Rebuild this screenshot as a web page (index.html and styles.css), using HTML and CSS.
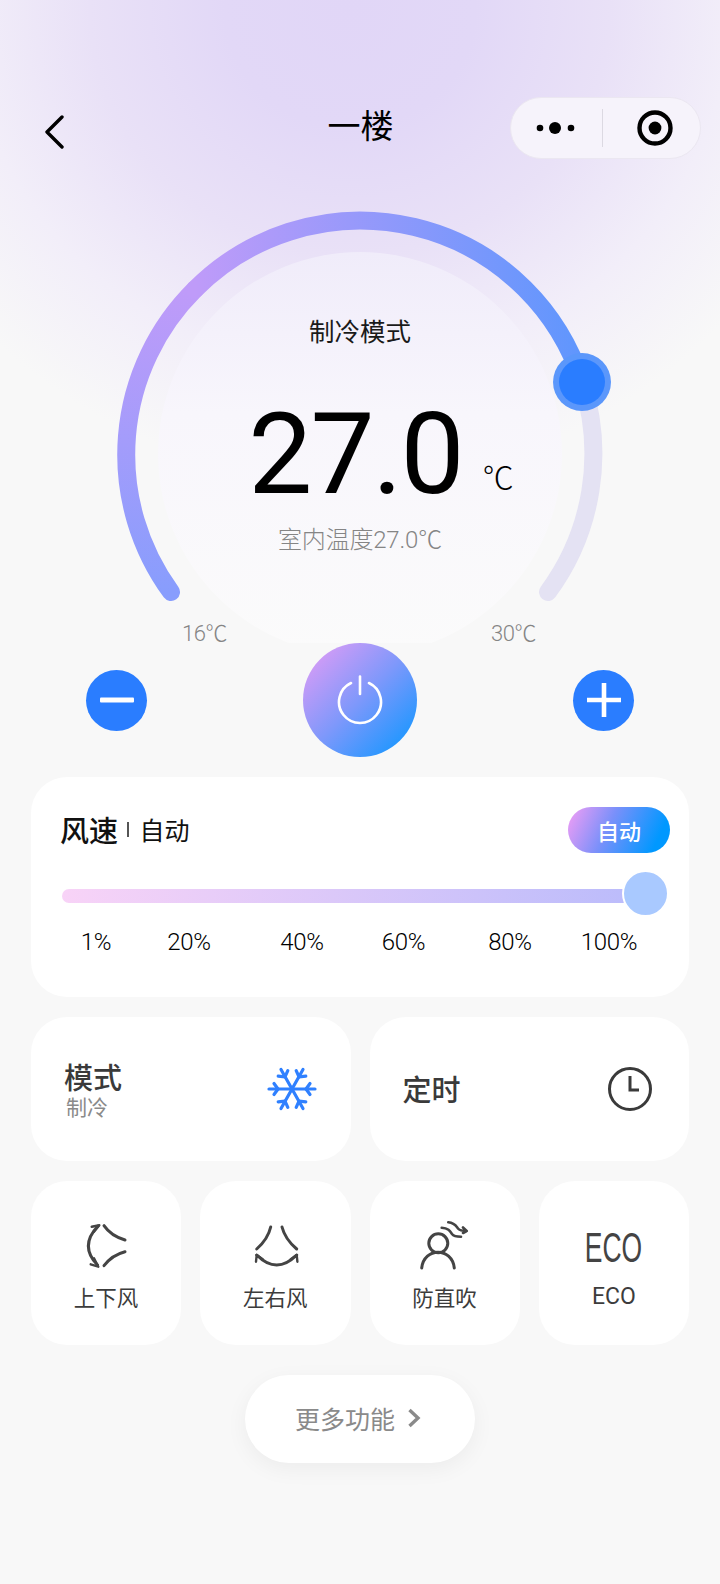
FILE: index.html
```html
<!DOCTYPE html>
<html lang="zh">
<head>
<meta charset="utf-8">
<title>一楼</title>
<link rel="stylesheet" href="styles.css">
</head>
<body>
<div class="page">
  <header class="nav">
    <svg class="back" width="20" height="34" viewBox="0 0 20 34"><path d="M18 2 L3 17 L18 32" fill="none" stroke="#000" stroke-width="3.4" stroke-linecap="round" stroke-linejoin="round"/></svg>
    <h1 class="title">一楼</h1>
    <div class="capsule">
      <div class="capsule-part">
        <svg width="42" height="14" viewBox="0 0 42 14"><circle cx="4" cy="7" r="3.3"/><circle cx="19" cy="7" r="6"/><circle cx="35" cy="7" r="3.3"/></svg>
      </div>
      <span class="capsule-line"></span>
      <div class="capsule-part capsule-target">
        <svg width="38" height="38" viewBox="0 0 38 38"><circle cx="19" cy="19" r="15.5" fill="none" stroke="#000" stroke-width="4.4"/><circle cx="19" cy="19" r="6.4"/></svg>
      </div>
    </div>
  </header>

  <section class="gauge">
    <svg class="gauge-art" width="720" height="484" viewBox="0 159 720 484">
      <defs>
        <linearGradient id="arcA" gradientUnits="userSpaceOnUse" x1="0" y1="592" x2="0" y2="290">
          <stop offset="0" stop-color="#889dfd"/>
          <stop offset="1" stop-color="#bf9bf9"/>
        </linearGradient>
        <linearGradient id="arcB" gradientUnits="userSpaceOnUse" x1="195" y1="0" x2="582" y2="0">
          <stop offset="0" stop-color="#bf9bf9"/>
          <stop offset="1" stop-color="#5f96fd"/>
        </linearGradient>
        <linearGradient id="disc" gradientUnits="userSpaceOnUse" x1="0" y1="252" x2="0" y2="656">
          <stop offset="0" stop-color="#f0ecfa"/>
          <stop offset="0.4" stop-color="#f8f6fc"/>
          <stop offset="1" stop-color="#fbfbfb"/>
        </linearGradient>
      </defs>
      <circle cx="360" cy="454" r="202" fill="url(#disc)"/>
      <path d="M548 592 A233 233 0 0 0 582 382" fill="none" stroke="#e4e2f3" stroke-width="18" stroke-linecap="round"/>
      <path d="M171 592 A233 233 0 0 1 195.2 289.2" fill="none" stroke="url(#arcA)" stroke-width="18" stroke-linecap="round"/>
      <path d="M195.2 289.2 A233 233 0 0 1 582 382" fill="none" stroke="url(#arcB)" stroke-width="18" stroke-linecap="round"/>
      <circle cx="582" cy="382" r="29" fill="#5b97fb"/>
      <circle cx="582" cy="382" r="23" fill="#2a7dff"/>
    </svg>
    <div class="mode">制冷模式</div>
    <div class="temp">27.0<span class="unit">℃</span></div>
    <div class="indoor">室内温度27.0℃</div>
    <div class="range"><span>16℃</span><span>30℃</span></div>
  </section>

  <section class="controls">
    <button class="round-btn">
      <svg width="34" height="6" viewBox="0 0 34 6"><rect width="34" height="5" y="0.5" fill="#fff" rx="1"/></svg>
    </button>
    <button class="power">
      <svg width="48" height="50" viewBox="0 0 48 50"><path d="M15 8 A21 21 0 1 0 33 8" fill="none" stroke="#fff" stroke-width="2.6" stroke-linecap="round"/><path d="M24 1.5 V19" fill="none" stroke="#fff" stroke-width="2.6" stroke-linecap="round"/></svg>
    </button>
    <button class="round-btn">
      <svg width="36" height="36" viewBox="0 0 36 36"><path d="M1 18 H35 M18 1 V35" fill="none" stroke="#fff" stroke-width="4.6"/></svg>
    </button>
  </section>

  <main class="cards">
    <section class="card speed">
      <div class="speed-head">
        <div class="speed-title"><strong>风速</strong><span class="speed-sep"></span><span class="speed-val">自动</span></div>
        <div class="pill">自动</div>
      </div>
      <div class="slider"><span class="thumb"></span></div>
      <div class="ticks"><span>1%</span><span>20%</span><span>40%</span><span>60%</span><span>80%</span><span>100%</span></div>
    </section>

    <div class="row-two">
      <section class="card wide mode-card">
        <div class="wide-text"><div class="wide-title">模式</div><div class="wide-sub">制冷</div></div>
        <svg class="flake" width="50" height="44" viewBox="0 0 50 44">
          <g fill="none" stroke="#2f80ff" stroke-width="3.2" stroke-linecap="round" stroke-linejoin="round">
            <path d="M2 22 H48"/>
            <path d="M14 2.5 L36 41.5"/>
            <path d="M36 2.5 L14 41.5"/>
            <path d="M7 16.5 L11 22 L7 27.5 M43 16.5 L39 22 L43 27.5"/>
            <path d="M11.2 9.2 L18 9.9 L20.8 3.7 M38.8 9.2 L32 9.9 L29.2 3.7"/>
            <path d="M11.2 34.8 L18 34.1 L20.8 40.3 M38.8 34.8 L32 34.1 L29.2 40.3"/>
          </g>
        </svg>
      </section>
      <section class="card wide timer-card">
        <div class="wide-title">定时</div>
        <svg class="clock" width="46" height="46" viewBox="0 0 46 46"><circle cx="23" cy="23" r="20.5" fill="none" stroke="#3a3a3a" stroke-width="3"/><path d="M23 10 V24 H32" fill="none" stroke="#3a3a3a" stroke-width="3"/></svg>
      </section>
    </div>

    <div class="row-four">
      <section class="card tile">
        <svg class="tile-icon" width="46" height="50" viewBox="0 0 46 50">
          <g fill="none" stroke="#444" stroke-width="3" stroke-linecap="round" stroke-linejoin="round">
            <path d="M15 5 Q-4 25 14.5 44"/>
            <path d="M8.7 5.7 L16.3 4.3 L11 10.7 M7.7 43.3 L15.3 45.7 L11 37.3" stroke-width="2.4"/>
            <path d="M21 4.7 Q28 15 42 19"/>
            <path d="M42 30.7 Q29 34 21 44.7"/>
          </g>
        </svg>
        <div class="tile-label">上下风</div>
      </section>
      <section class="card tile">
        <svg class="tile-icon" width="50" height="50" viewBox="-2 0 50 50">
          <g fill="none" stroke="#444" stroke-width="3" stroke-linecap="round" stroke-linejoin="round">
            <path d="M18.7 6 Q16 18 4.7 28"/>
            <path d="M30 6 Q33 18 44.7 28"/>
            <path d="M4.7 34 Q24.7 54 44.7 34"/>
            <path d="M4 40.7 L4.7 34 L10.7 38.3 M45.4 40.7 L44.7 34 L38.7 38.3" stroke-width="2.4"/>
          </g>
        </svg>
        <div class="tile-label">左右风</div>
      </section>
      <section class="card tile">
        <svg class="tile-icon" width="52" height="50" viewBox="0 0 52 50">
          <g fill="none" stroke="#444" stroke-width="3" stroke-linecap="round" stroke-linejoin="round">
            <circle cx="19.3" cy="22.3" r="9.5"/>
            <path d="M2.7 47 C5 26 33 26 35.3 47"/>
            <path d="M29.3 1.3 C36 2 37 5 39 7.5 C41 10 44 10 47.7 10 M44 6.5 L47.7 10 L44 12" stroke-width="2.6"/>
            <path d="M22.7 6.7 C29 7 31 10 33 13 C35 15.7 38 15.7 42 15.7" stroke-width="2.6"/>
          </g>
        </svg>
        <div class="tile-label">防直吹</div>
      </section>
      <section class="card tile">
        <div class="eco-mark">ECO</div>
        <div class="tile-label tile-label-latin">ECO</div>
      </section>
    </div>

    <button class="more">更多功能<svg width="14" height="20" viewBox="0 0 14 20"><path d="M2.5 2 L11 10 L2.5 18" fill="none" stroke="#8a8a8a" stroke-width="3.4"/></svg></button>
  </main>
</div>
</body>
</html>
```
FILE: styles.css
```css
* { box-sizing: border-box; }
html, body { margin: 0; padding: 0; }
body {
  width: 720px;
  height: 1584px;
  overflow: hidden;
  font-family: "Noto Sans CJK SC", Roboto, sans-serif;
  background: #f8f8f8;
}
button { font-family: inherit; border: 0; padding: 0; }

.page {
  height: 1584px;
  padding-top: 97px;
  background:
    radial-gradient(ellipse 500px 470px at 350px 10px, #e1d6f7 0%, #e2d8f7 25%, #e9e1f7 52%, #f2eef9 76%, #f8f8f8 100%);
}

.nav {
  display: grid;
  grid-template-columns: 1fr auto 1fr;
  align-items: center;
  height: 62px;
  padding: 0 19px 0 20px;
}
.back { margin: 8px 0 0 24px; }
.title {
  margin: -9px 0 0;
  font-size: 33px;
  font-weight: 400;
  line-height: 40px;
  color: #000;
}
.capsule {
  justify-self: end;
  display: flex;
  align-items: center;
  width: 191px;
  height: 62px;
  border-radius: 31px;
  border: 1px solid #ebe7f1;
  background: #f6f3fb;
}
.capsule-part { flex: 1; display: flex; justify-content: center; align-items: center; }
.capsule-part svg { display: block; }
.capsule-target { padding-left: 6px; }
.capsule-line { width: 1px; height: 38px; background: #dcd9e2; }

.gauge {
  position: relative;
  height: 484px;
  display: flex;
  flex-direction: column;
  align-items: center;
  padding-top: 153px;
}
.gauge-art { position: absolute; left: 0; top: 0; display: block; }
.mode, .temp, .indoor, .range { position: relative; }
.mode { font-size: 25.5px; line-height: 36px; color: #1a1a1a; }
.temp {
  margin: 46px 9px 0 0;
  font-family: Roboto, sans-serif;
  font-size: 114px;
  line-height: 120px;
  letter-spacing: -2px;
  color: #000;
}
.unit {
  position: absolute;
  left: 100%;
  bottom: 20px;
  margin-left: 20px;
  font-family: "Noto Sans CJK SC", sans-serif;
  font-weight: 300;
  font-size: 31px;
  line-height: 36px;
  letter-spacing: 0;
  white-space: nowrap;
}
.indoor {
  margin-top: 10px;
  font-family: Roboto, "Noto Sans CJK SC", sans-serif;
  font-weight: 300;
  font-size: 24px;
  line-height: 32px;
  letter-spacing: -0.2px;
  color: #858585;
}
.range {
  align-self: stretch;
  margin-top: auto;
  padding: 0 184px 0 182px;
  display: flex;
  justify-content: space-between;
  font-family: Roboto, "Noto Sans CJK SC", sans-serif;
  font-weight: 300;
  font-size: 22px;
  line-height: 28px;
  letter-spacing: -0.5px;
  color: #858585;
  margin-bottom: -5px;
}

.controls {
  position: relative;
  height: 114px;
  padding: 0 86px;
  display: flex;
  align-items: center;
  justify-content: space-between;
}
.round-btn {
  width: 61px;
  height: 61px;
  border-radius: 50%;
  background: #2a7dff;
  display: flex;
  align-items: center;
  justify-content: center;
}
.power {
  width: 114px;
  height: 114px;
  border-radius: 50%;
  background: linear-gradient(135deg, #d99cf6 8%, #7e98fb 50%, #1c97ff 90%);
  display: flex;
  align-items: center;
  justify-content: center;
}

.cards {
  margin-top: 20px;
  padding: 0 31px;
  display: flex;
  flex-direction: column;
  gap: 20px;
}
.card { background: #fff; border-radius: 36px; }

.speed { height: 220px; padding: 30px 19px 0 29px; }
.speed-head { display: flex; justify-content: space-between; align-items: center; height: 46px; }
.speed-title { display: flex; align-items: center; gap: 9px; margin-top: -2px; color: #111; }
.speed-title strong { font-size: 29px; font-weight: 500; line-height: 40px; }
.speed-sep { width: 1.5px; height: 15px; background: #555; }
.speed-val { font-size: 25px; line-height: 40px; margin-left: 2px; }
.pill {
  width: 102px;
  height: 46px;
  border-radius: 23px;
  background: linear-gradient(115deg, #e59cf5 5%, #7a90fa 40%, #0098ff 85%);
  color: #fff;
  font-size: 22px;
  font-weight: 500;
  line-height: 46px;
  text-align: center;
}
.slider {
  position: relative;
  margin: 36px 0 0 2px;
  width: 565px;
  height: 14px;
  border-radius: 7px 0 0 7px;
  background: linear-gradient(90deg, #f8d3f7, #bcbcfb);
}
.thumb {
  position: absolute;
  left: 560px;
  top: -19px;
  width: 47px;
  height: 47px;
  border-radius: 50%;
  background: #a9c9ff;
  border: 2px solid #fff;
}
.ticks {
  margin: 24px 0 0 2px;
  display: grid;
  grid-template-columns: 68px 118px 108px 95px 118px 80px;
  justify-items: center;
  font-family: Roboto, sans-serif;
  font-weight: 300;
  font-size: 24px;
  line-height: 30px;
  letter-spacing: -0.3px;
  color: #000;
}

.row-two { display: grid; grid-template-columns: 1fr 1fr; gap: 19px; }
.wide {
  height: 144px;
  display: flex;
  align-items: center;
  justify-content: space-between;
  padding: 0 36px 0 33px;
}
.mode-card { padding-right: 34px; }
.timer-card .wide-title { margin-top: -3px; }
.wide-text { margin-top: -1px; }
.wide-title { font-size: 29px; line-height: 32px; font-weight: 500; color: #3a3a3a; }
.wide-sub { font-size: 21px; line-height: 24px; color: #8a8a8a; padding-left: 2px; margin-top: 2px; }
.flake, .clock { display: block; }

.row-four { display: grid; grid-template-columns: repeat(4, 1fr); gap: 19px; }
.tile {
  height: 164px;
  padding-top: 40px;
  display: flex;
  flex-direction: column;
  align-items: center;
}
.tile-icon { display: block; }
.tile-label {
  margin-top: 12px;
  font-size: 21.5px;
  line-height: 28px;
  color: #3c3c3c;
}
.tile-label-latin { margin-top: 10px; font-family: Roboto, sans-serif; font-size: 23px; }
.eco-mark {
  height: 50px;
  margin-top: 2px;
  font-family: "Liberation Sans", sans-serif;
  font-size: 42px;
  line-height: 50px;
  color: #444;
  transform: scaleX(0.63);
  white-space: nowrap;
}

.more {
  align-self: center;
  margin-top: 10px;
  width: 230px;
  height: 88px;
  padding: 0 4px 3px 0;
  border-radius: 44px;
  background: #fff;
  box-shadow: 0 6px 22px rgba(0,0,0,0.05);
  display: flex;
  align-items: center;
  justify-content: center;
  gap: 12px;
  font-size: 25px;
  color: #8a8a8a;
}
```
